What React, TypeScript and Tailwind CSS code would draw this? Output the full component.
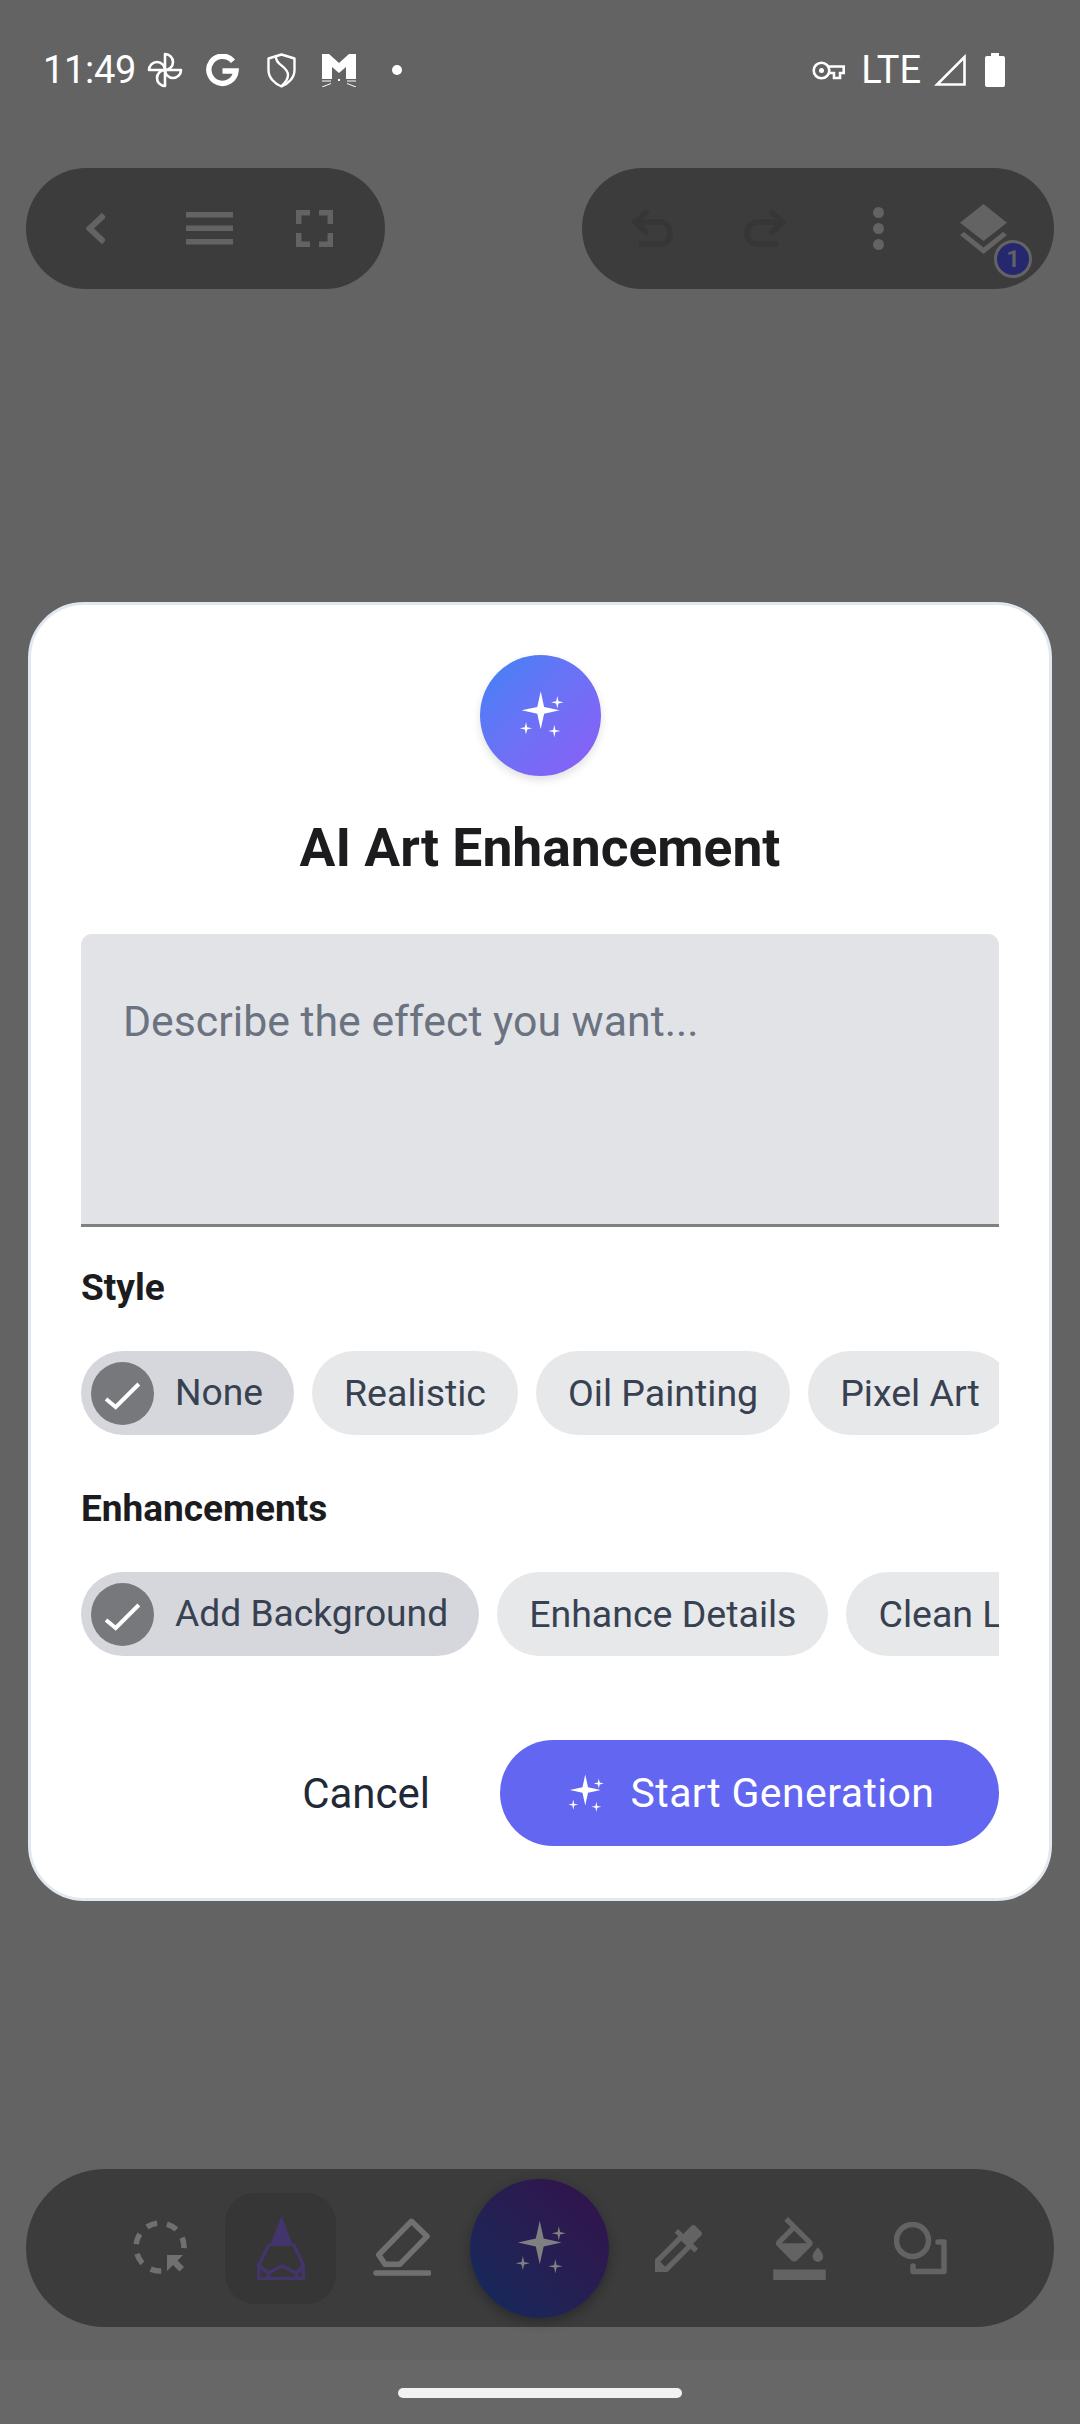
import { cx } from "class-variance-authority";

function Star({ x, y, r, fill }: { x: number; y: number; r: number; fill: string }) {
  const k = r * 0.18;
  return (
    <path
      d={`M${x} ${y - r}L${x + k} ${y - k}L${x + r} ${y}L${x + k} ${y + k}L${x} ${y + r}L${x - k} ${y + k}L${x - r} ${y}L${x - k} ${y - k}Z`}
      fill={fill}
    />
  );
}

function Sparkles({ fill, viewBox, className }: { fill: string; viewBox: string; className: string }) {
  return (
    <svg viewBox={viewBox} className={className}>
      <Star x={60.7} y={55.3} r={19} fill={fill} />
      <Star x={77.3} y={47.3} r={6.2} fill={fill} />
      <Star x={46} y={73.3} r={6.2} fill={fill} />
      <Star x={74.3} y={76} r={6.2} fill={fill} />
    </svg>
  );
}

function StatusBar() {
  return (
    <div className="flex h-[140px] items-center justify-between pl-[43px] pr-[75px] text-[38px] leading-none text-white">
      <div className="flex items-center">
        <span className="tracking-[-0.3px]">11:49</span>
        {/* fan */}
        <svg viewBox="0 0 36 36" className="ml-[11px] h-[36px] w-[36px]" fill="none" stroke="white" strokeWidth="2.6">
          {[0, 90, 180, 270].map((a) => (
            <path key={a} d="M18 18V2A8 8 0 0 1 18 18Z" transform={`rotate(${a} 18 18)`} strokeLinejoin="round" />
          ))}
        </svg>
        {/* google */}
        <svg viewBox="0 0 33 33" className="ml-[23px] h-[33px] w-[33px]" fill="none" stroke="white" strokeWidth="5.4">
          <path d="M27 7.2A13.6 13.6 0 1 0 30 17H16.5" />
        </svg>
        {/* shield */}
        <svg viewBox="0 0 29 35" className="ml-[28px] h-[35px] w-[29px]" fill="none" stroke="white" strokeWidth="2.4">
          <path d="M14.5 1.5 27.5 5.5V17C27.5 25 21 31 14.5 33.5 8 31 1.5 25 1.5 17V5.5Z" strokeLinejoin="round" />
          <path d="M9 3.5C8 12 21 13 21 22 21 26 18 30 14.5 33" />
        </svg>
        {/* cat mail */}
        <svg viewBox="0 0 34 33" className="ml-[26px] h-[33px] w-[34px]">
          <path d="M0 0H7L17 9 27 0H34V25H24V13L17 19 10 13V25H0Z" fill="white" />
          <rect x="16" y="25" width="2" height="2" fill="white" />
          <path d="M0 27H9M0 33 9 29.500M25 27H34M25 29.500 34 33" stroke="white" strokeWidth="1" fill="none" />
        </svg>
        <div className="ml-[36px] h-[10px] w-[10px] rounded-full bg-white" />
      </div>
      <div className="flex items-center">
        {/* vpn key */}
        <svg viewBox="0 0 33 19" className="h-[19px] w-[33px]" fill="none" stroke="white" strokeWidth="2.6">
          <circle cx="9.500" cy="9.500" r="7.800" />
          <circle cx="9.500" cy="9.500" r="2.500" fill="white" stroke="none" />
          <path d="M16.500 5.500H31.700V12H28V17H22V12H16.500" />
        </svg>
        <span className="ml-[16px]">LTE</span>
        <svg viewBox="0 0 32 32" className="ml-[13px] h-[32px] w-[32px]" fill="none" stroke="white" strokeWidth="2.6">
          <path d="M30.500 3V30.500H3Z" />
        </svg>
        <svg viewBox="0 0 20 34" className="ml-[19px] h-[34px] w-[20px]" fill="white">
          <path d="M6 0H14V3H18Q20 3 20 5V32Q20 34 18 34H2Q0 34 0 32V5Q0 3 2 3H6Z" />
        </svg>
      </div>
    </div>
  );
}

function TopBars() {
  return (
    <div className="mt-[28px] flex justify-between px-[26px]">
      <div className="flex h-[121px] w-[359px] items-center rounded-full bg-[#3c3c3c] pl-[60px]">
        <svg viewBox="0 0 19 31" className="h-[31px] w-[19px]" fill="none" stroke="#636363" strokeWidth="6">
          <path d="M18 2 3.500 15.500 18 29" />
        </svg>
        <svg viewBox="0 0 47 33" className="ml-[81px] h-[33px] w-[47px]" fill="#636363">
          <rect width="47" height="5.500" />
          <rect y="13.500" width="47" height="5.500" />
          <rect y="27" width="47" height="5.500" />
        </svg>
        <svg viewBox="0 0 37 37" className="ml-[63px] h-[37px] w-[37px]" fill="none" stroke="#636363" strokeWidth="5.500">
          <path d="M2.700 14V2.700H14M23 2.700H34.300V14M34.300 23V34.300H23M14 34.300H2.700V23" />
        </svg>
      </div>
      <div className="flex h-[121px] w-[472px] items-center rounded-full bg-[#3c3c3c] pl-[50px]">
        <svg viewBox="632 208 41 40" className="h-[40px] w-[41px]" fill="none" stroke="#363636" strokeWidth="5.500">
          <path d="M648 210 635 221 648 233M635 221H660C667 221 670 227 670 233 670 239 667 243 660 243H639" />
        </svg>
        <svg viewBox="745 208 42 40" className="ml-[71px] h-[40px] w-[42px]" fill="none" stroke="#363636" strokeWidth="5.500">
          <path d="M771 210 784 221 771 233M784 221H759C752 221 748 227 748 233 748 239 752 243 759 243H779" />
        </svg>
        <div className="ml-[87px] flex w-[11px] flex-col gap-[5px]">
          <div className="h-[11px] w-[11px] rounded-full bg-[#636363]" />
          <div className="h-[11px] w-[11px] rounded-full bg-[#636363]" />
          <div className="h-[11px] w-[11px] rounded-full bg-[#636363]" />
        </div>
        <div className="relative ml-[76px] h-[50px] w-[47px]">
          <svg viewBox="0 0 47 50" className="h-[50px] w-[47px]" fill="#636363">
            <path d="M23.500 0 47 18.700 23.500 37 0 18.700Z" />
            <path d="M0 31 4 28 23.500 43.500 43 28 47 31 23.500 50Z" />
          </svg>
          <div className="absolute left-[34px] top-[36px] flex h-[38px] w-[38px] items-center justify-center rounded-full border-[3px] border-[#636363] bg-[#26286f] text-[24px] font-semibold leading-none text-[#636363]">
            1
          </div>
        </div>
      </div>
    </div>
  );
}

function BottomBar() {
  return (
    <div className="mx-[26px] flex h-[158px] items-center rounded-full bg-[#3c3c3c] pl-[107px]">
      {/* lasso */}
      <svg viewBox="0 0 54 56" className="h-[56px] w-[54px]" fill="none">
        <circle
          cx="27"
          cy="27"
          r="24"
          stroke="#707070"
          strokeWidth="5.500"
          pathLength={360}
          strokeDasharray="26 24 26 24 26 24 26 24 26 24 26 84"
          transform="rotate(87 27 27)"
        />
        <path d="M34 35H50L44.500 40.500 51 47 46.500 51.500 40 45 34 51Z" fill="#707070" />
      </svg>
      <div className="ml-[38px] flex h-[111px] w-[111px] items-center justify-center rounded-[30px] bg-[#363636]">
        <svg viewBox="0 0 48 64" className="h-[64px] w-[48px]" fill="none" stroke="#43356b" strokeWidth="3.500">
          <path d="M24.500 0 36.500 30H12.500Z" fill="#43356b" stroke="none" />
          <path d="M12.500 28 1.700 49V62.500H46.300V49L36.500 28" />
          <path d="M2 50 11.400 57 25 50 39.600 57 46 50M11.400 57V62M39.600 57V62" />
        </svg>
      </div>
      <svg viewBox="0 0 58 60" className="ml-[37px] h-[60px] w-[58px]" fill="none" stroke="#707070" strokeWidth="5.500" strokeLinejoin="round" strokeLinecap="round">
        <path d="M38.500 3.300 54 18.300 26.800 46.300H12L5.700 36.700Z" />
        <path d="M3 55H56" />
      </svg>
      <div className="ml-[39px] flex h-[139px] w-[139px] items-center justify-center rounded-full bg-gradient-to-tr from-[#0e2a5c] to-[#32104a] shadow-[0_4px_12px_rgba(0,0,0,0.3)]">
        <Sparkles fill="#808080" viewBox="0 0 121 121" className="h-[139px] w-[139px]" />
      </div>
      <svg viewBox="3 3 18 18" className="ml-[46px] h-[47px] w-[47px]" fill="#636363">
        <path d="M20.710 5.630l-2.340-2.340c-.390-.390-1.020-.390-1.410 0l-3.120 3.120-1.930-1.910-1.410 1.410 1.420 1.420L3 16.250V21h4.750l8.920-8.920 1.420 1.420 1.410-1.410-1.920-1.920 3.120-3.120c.400-.400.400-1.030.010-1.420zM6.920 19L5 17.080l8.060-8.060 1.920 1.920L6.920 19z" />
      </svg>
      <svg viewBox="2 0 20 24" className="ml-[71px] h-[63px] w-[53px]" fill="#636363">
        <path d="M16.560 8.940L7.620 0 6.210 1.410l2.380 2.380-5.150 5.150c-.590.590-.590 1.540 0 2.120l5.500 5.500c.290.290.680.440 1.060.440s.770-.150 1.060-.440l5.500-5.500c.590-.580.590-1.530 0-2.120zM5.210 10L10 5.210 14.790 10H5.210zM19 11.500s-2 2.170-2 3.500c0 1.100.900 2 2 2s2-.900 2-2c0-1.330-2-3.500-2-3.500zM2 20h20v4H2v-4z" />
      </svg>
      <svg viewBox="0 0 53 53" className="ml-[68px] h-[53px] w-[53px]" fill="none" stroke="#636363" strokeWidth="5.500" strokeLinejoin="round" strokeLinecap="round">
        <circle cx="18.500" cy="18.500" r="16" />
        <path d="M44 20H50V49.500H19V44" />
      </svg>
    </div>
  );
}

function Check() {
  return (
    <div className="flex h-[63px] w-[63px] shrink-0 items-center justify-center rounded-full bg-[#77787b]">
      <svg viewBox="0 0 63 63" className="h-[63px] w-[63px]" fill="none" stroke="white" strokeWidth="4">
        <path d="M15 37 24.700 45 47.800 22" />
      </svg>
    </div>
  );
}

function Chip({ label, selected }: { label: string; selected?: boolean }) {
  return (
    <div
      className={cx(
        "flex h-[84px] shrink-0 items-center rounded-full text-[#374151]",
        selected ? "bg-[#d5d7dc] pl-[10px] pr-[31px] text-[37.200px]" : "bg-[#e7e8ea] px-[32px] text-[37.500px]",
      )}
    >
      {selected && <Check />}
      <span className={selected ? "ml-[21px]" : ""}>{label}</span>
    </div>
  );
}

function ChipRow({ children }: { children: React.ReactNode }) {
  return <div className="mt-[41px] flex gap-[18px] overflow-hidden">{children}</div>;
}

function Dialog() {
  return (
    <div className="absolute left-[28px] top-[602px] w-[1024px] rounded-[56px] border-[3px] border-[#e2e8f0] bg-white px-[50px] pb-[52px] pt-[50px]">
      <div className="mx-auto flex h-[121px] w-[121px] items-center justify-center rounded-full bg-gradient-to-br from-[#3b82f6] to-[#8b5cf6] shadow-[0_4px_8px_rgba(0,0,0,0.12)]">
        <Sparkles fill="white" viewBox="0 0 121 121" className="h-[121px] w-[121px]" />
      </div>
      <h2 className="mt-[39px] text-center text-[53.400px] font-bold leading-[66px] text-[#1c1c1e]">AI Art Enhancement</h2>
      <div className="mt-[53px] h-[293px] rounded-t-[11px] border-b-[3px] border-[#808080] bg-[#e2e3e7] pl-[42px] pt-[57px] text-[42.800px] leading-[60px] text-[#6b7280]">
        Describe the effect you want...
      </div>
      <div className="mt-[39px] text-[37px] font-bold leading-[44px] text-[#1c1c1e]">Style</div>
      <ChipRow>
        <Chip label="None" selected />
        <Chip label="Realistic" />
        <Chip label="Oil Painting" />
        <Chip label="Pixel Art" />
      </ChipRow>
      <div className="mt-[52px] text-[37px] font-bold leading-[44px] text-[#1c1c1e]">Enhancements</div>
      <ChipRow>
        <Chip label="Add Background" selected />
        <Chip label="Enhance Details" />
        <Chip label="Clean Lines" />
      </ChipRow>
      <div className="mt-[84px] flex items-center justify-end">
        <span className="pt-[2px] text-[42px] leading-none text-[#1f2937]">Cancel</span>
        <div className="ml-[70px] flex h-[106px] w-[499px] items-center justify-center rounded-full bg-[#6366f1] text-[41px] tracking-[0.4px] text-white">
          <Sparkles fill="white" viewBox="36 32 50 54" className="h-[44px] w-[41px]" />
          <span className="ml-[25px] pt-[2px]">Start Generation</span>
        </div>
      </div>
    </div>
  );
}

export default function App() {
  return (
    <div className="relative flex h-[2424px] w-[1080px] flex-col overflow-hidden bg-[#636363] font-[Roboto,sans-serif]">
      <StatusBar />
      <TopBars />
      <div className="flex-1" />
      <BottomBar />
      <div className="mt-[33px] flex h-[64px] items-start justify-center bg-[#676767] pt-[28px]">
        <div className="h-[10px] w-[284px] rounded-full bg-[#f2f2f2]" />
      </div>
      <Dialog />
    </div>
  );
}
